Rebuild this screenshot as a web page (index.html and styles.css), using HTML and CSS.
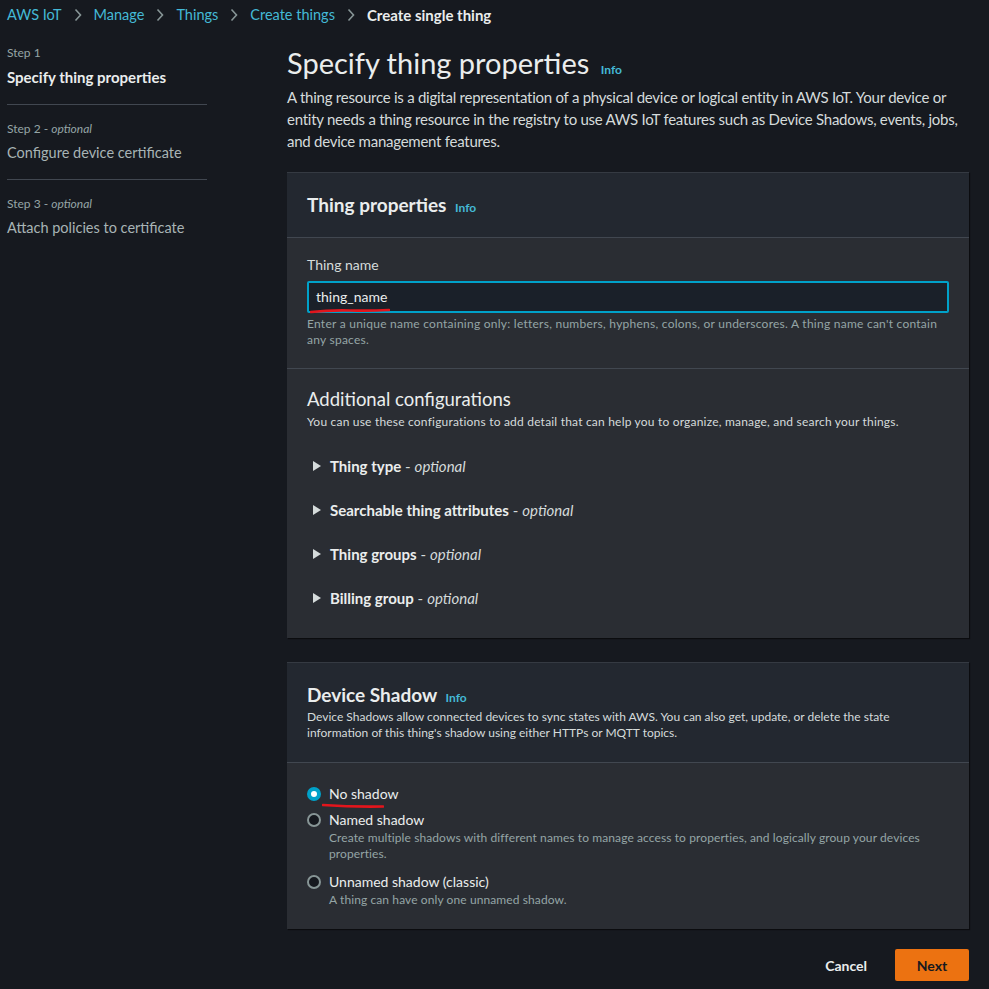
FILE: index.html
```html
<!DOCTYPE html>
<html lang="en">
<head>
<meta charset="utf-8">
<title>Create single thing</title>
<link rel="stylesheet" href="styles.css">
</head>
<body>
<nav class="breadcrumbs">
  <a class="crumb" href="#">AWS IoT</a>
  <svg class="chev" viewBox="0 0 8 14" width="8" height="14"><path d="M1.5 1.5 L6.5 7 L1.5 12.5" fill="none" stroke="#879596" stroke-width="1.6"/></svg>
  <a class="crumb" href="#">Manage</a>
  <svg class="chev" viewBox="0 0 8 14" width="8" height="14"><path d="M1.5 1.5 L6.5 7 L1.5 12.5" fill="none" stroke="#879596" stroke-width="1.6"/></svg>
  <a class="crumb" href="#">Things</a>
  <svg class="chev" viewBox="0 0 8 14" width="8" height="14"><path d="M1.5 1.5 L6.5 7 L1.5 12.5" fill="none" stroke="#879596" stroke-width="1.6"/></svg>
  <a class="crumb" href="#">Create things</a>
  <svg class="chev" viewBox="0 0 8 14" width="8" height="14"><path d="M1.5 1.5 L6.5 7 L1.5 12.5" fill="none" stroke="#879596" stroke-width="1.6"/></svg>
  <span class="crumb current">Create single thing</span>
</nav>

<div class="layout">
  <aside class="steps">
    <div class="step">
      <div class="step-label">Step 1</div>
      <div class="step-title active">Specify thing properties</div>
    </div>
    <div class="step">
      <div class="step-label">Step 2 - <i>optional</i></div>
      <div class="step-title">Configure device certificate</div>
    </div>
    <div class="step last">
      <div class="step-label">Step 3 - <i>optional</i></div>
      <div class="step-title">Attach policies to certificate</div>
    </div>
  </aside>

  <main class="main">
    <h1 class="page-title">Specify thing properties <a class="info" href="#">Info</a></h1>
    <p class="page-desc">A thing resource is a digital representation of a physical device or logical entity in AWS IoT. Your device or entity needs a thing resource in the registry to use AWS IoT features such as Device Shadows, events, jobs, and device management features.</p>

    <section class="card">
      <header class="card-header">
        <h2 class="card-title">Thing properties <a class="info" href="#">Info</a></h2>
      </header>
      <div class="card-section">
        <label class="field-label">Thing name</label>
        <div class="input-wrap">
          <div class="input">thing_name</div>
          <svg class="scribble scribble-name" viewBox="0 0 80 6" width="80" height="6"><path d="M1 4 Q20 2 40 2.5 T79 2" fill="none" stroke="#e3151c" stroke-width="2.6" stroke-linecap="round"/></svg>
        </div>
        <div class="hint">Enter a unique name containing only: letters, numbers, hyphens, colons, or underscores. A thing name can't contain any spaces.</div>
      </div>
      <div class="card-section extra">
        <h3 class="section-title">Additional configurations</h3>
        <div class="section-desc">You can use these configurations to add detail that can help you to organize, manage, and search your things.</div>
        <ul class="expanders">
          <li class="expander"><span class="caret"></span><b>Thing type</b>&nbsp;- <i>optional</i></li>
          <li class="expander"><span class="caret"></span><b>Searchable thing attributes</b>&nbsp;- <i>optional</i></li>
          <li class="expander"><span class="caret"></span><b>Thing groups</b>&nbsp;- <i>optional</i></li>
          <li class="expander"><span class="caret"></span><b>Billing group</b>&nbsp;- <i>optional</i></li>
        </ul>
      </div>
    </section>

    <section class="card">
      <header class="card-header shadow-header">
        <h2 class="card-title">Device Shadow <a class="info" href="#">Info</a></h2>
        <div class="header-desc">Device Shadows allow connected devices to sync states with AWS. You can also get, update, or delete the state information of this thing's shadow using either HTTPs or MQTT topics.</div>
      </header>
      <div class="card-section radios">
        <div class="radio-opt">
          <span class="radio checked"></span>
          <div class="radio-text">
            <div class="radio-label">No shadow</div>
          </div>
          <svg class="scribble scribble-radio" viewBox="0 0 62 6" width="62" height="6"><path d="M1 2 Q30 4 61 3.5" fill="none" stroke="#e3151c" stroke-width="2.6" stroke-linecap="round"/></svg>
        </div>
        <div class="radio-opt">
          <span class="radio"></span>
          <div class="radio-text">
            <div class="radio-label">Named shadow</div>
            <div class="radio-desc">Create multiple shadows with different names to manage access to properties, and logically group your devices properties.</div>
          </div>
        </div>
        <div class="radio-opt">
          <span class="radio"></span>
          <div class="radio-text">
            <div class="radio-label">Unnamed shadow (classic)</div>
            <div class="radio-desc">A thing can have only one unnamed shadow.</div>
          </div>
        </div>
      </div>
    </section>

    <div class="actions">
      <button class="btn-link">Cancel</button>
      <button class="btn-primary">Next</button>
    </div>
  </main>
</div>
</body>
</html>
```

FILE: styles.css
```css
* { box-sizing: border-box; }

html, body {
  margin: 0;
  padding: 0;
  background: #16191f;
  color: #d5dbdb;
  font-family: Lato, "Open Sans", "DejaVu Sans", sans-serif;
  font-size: 14px;
}

a { text-decoration: none; }

.breadcrumbs {
  display: flex;
  align-items: center;
  gap: 12px;
  height: 30px;
  padding: 0 7px;
  font-size: 14.5px;
}
.crumb { color: #44b9d6; line-height: 22px; }
.crumb.current { color: #eaeded; font-weight: 700; font-size: 15px; }
.chev { display: block; }

.layout {
  display: flex;
  gap: 80px;
  padding: 15px 20px 0 7px;
}

.steps {
  width: 200px;
  flex: none;
}
.step {
  padding-bottom: 16px;
  border-bottom: 1px solid #414750;
  margin-bottom: 16px;
}
.step:first-child { padding-bottom: 17px; }
.step.last { border-bottom: 0; }
.step-label {
  font-size: 12px;
  line-height: 16px;
  color: #95a5a6;
  margin-bottom: 6px;
}
.step-label i { font-style: italic; }
.step-title {
  font-size: 14.5px;
  line-height: 20px;
  color: #a8b4b5;
}
.step-title.active { color: #eaeded; font-weight: 700; font-size: 15px; }

.main {
  flex: 1;
  min-width: 0;
}

.page-title {
  margin: 0;
  font-size: 29px;
  line-height: 36px;
  font-weight: 400;
  color: #eaeded;
}
.info {
  color: #44b9d6;
  font-size: 12px;
  line-height: 1;
  font-weight: 700;
  margin-left: 4px;
  vertical-align: baseline;
}
.page-desc {
  margin: 5px 0 20px;
  font-size: 15px;
  line-height: 22px;
  color: #d5dbdb;
  letter-spacing: -0.25px;
}

.card {
  background: #2a2d33;
  border-top: 1px solid #353a42;
  box-shadow: 1px 1px 1px rgba(0,0,0,0.5);
  margin-bottom: 24px;
}
.card-header {
  background: #232830;
  padding: 19px 20px 20px;
  border-bottom: 1px solid #414750;
}
.card-title {
  margin: 0;
  font-size: 19px;
  line-height: 25px;
  font-weight: 700;
  color: #eaeded;
}
.shadow-header { padding-bottom: 21px; }
.header-desc {
  margin-top: 2px;
  font-size: 12px;
  line-height: 16px;
  color: #d5dbdb;
}

.card-section {
  padding: 17px 20px 20px;
  border-bottom: 1px solid #414750;
}
.card-section:last-child { border-bottom: 0; }

.field-label {
  display: block;
  font-size: 14px;
  line-height: 20px;
  color: #d5dbdb;
}
.input-wrap {
  position: relative;
  margin-top: 6px;
}
.input {
  height: 32px;
  border: 2px solid #00a1c9;
  border-radius: 2px;
  background: #1a2029;
  padding: 0 7px;
  line-height: 28px;
  font-size: 14px;
  color: #eaeded;
}
.scribble { position: absolute; display: block; }
.scribble-name { left: 3px; top: 27px; }
.hint {
  margin-top: 3px;
  font-size: 12px;
  line-height: 16px;
  color: #95a5a6;
  letter-spacing: 0.25px;
}

.extra { padding: 18px 20px 18px; }
.section-title {
  margin: 0;
  font-size: 18.5px;
  line-height: 24px;
  font-weight: 400;
  color: #eaeded;
}
.section-desc {
  margin-top: 3px;
  font-size: 12px;
  line-height: 16px;
  color: #d5dbdb;
  letter-spacing: 0.2px;
}
.expanders {
  list-style: none;
  margin: 14px 0 0;
  padding: 0;
}
.expander {
  display: flex;
  align-items: center;
  height: 44px;
  font-size: 15px;
  color: #d5dbdb;
}
.expander b { color: #eaeded; font-weight: 700; }
.expander i { font-style: italic; margin-left: 4px; }
.caret {
  width: 0;
  height: 0;
  border-top: 5px solid transparent;
  border-bottom: 5px solid transparent;
  border-left: 8px solid #d5dbdb;
  margin: 0 9px 0 6px;
}

.radios {
  padding: 21px 20px 17px;
  display: flex;
  flex-direction: column;
  gap: 6px;
}
.radio-opt {
  position: relative;
  display: flex;
  gap: 8px;
  align-items: flex-start;
}
.radio {
  flex: none;
  width: 14px;
  height: 14px;
  border-radius: 50%;
  border: 2px solid #879596;
  background: #16191f;
  margin-top: 3px;
}
.radio.checked {
  border: 4px solid #00a1c9;
  background: #ffffff;
}
.radio-label {
  font-size: 14px;
  line-height: 20px;
  color: #eaeded;
}
.radio-desc {
  padding-bottom: 4px;
  font-size: 12px;
  line-height: 16px;
  color: #95a5a6;
  letter-spacing: 0.1px;
}
.scribble-radio { left: 15px; top: 19px; }

.actions {
  display: flex;
  justify-content: flex-end;
  align-items: center;
  gap: 8px;
  margin-top: -4px;
}
.btn-link, .btn-primary {
  font-family: inherit;
  font-size: 14px;
  font-weight: 700;
  height: 32px;
  border: 0;
  cursor: pointer;
}
.btn-link {
  background: transparent;
  color: #eaeded;
  padding: 0 20px;
}
.btn-primary {
  background: #ec7211;
  color: #16191f;
  border-radius: 2px;
  width: 74px;
}
```
